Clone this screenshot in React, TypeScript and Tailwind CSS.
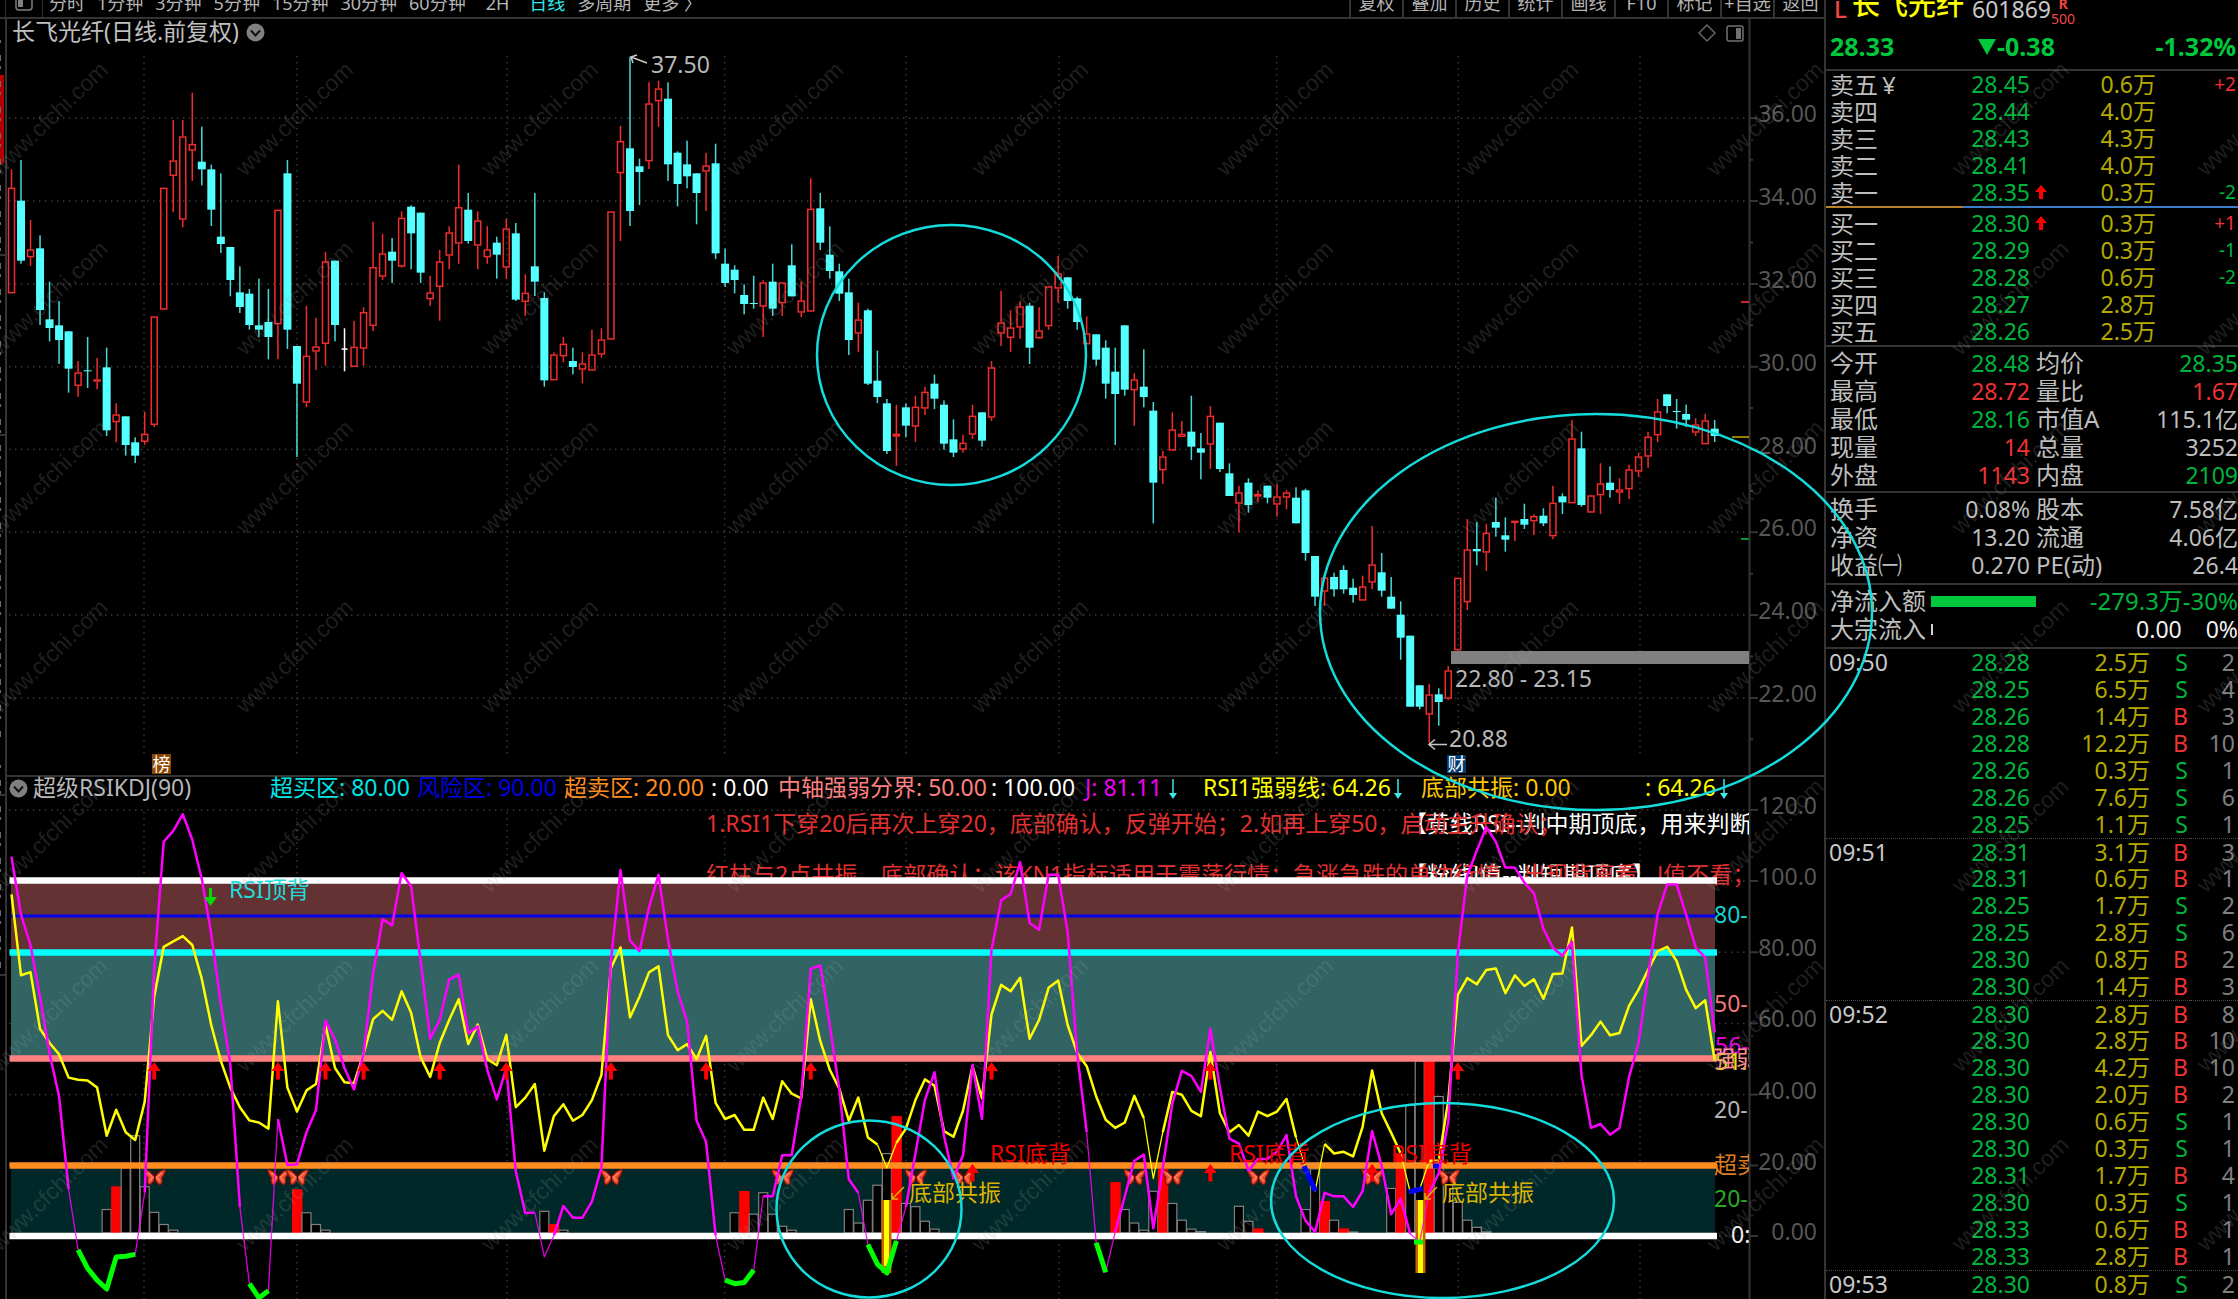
import type { ReactNode } from "react";

/* ---------- shared chart geometry ---------- */
const X0 = 11.5;
const STEP = 9.515;
const xAt = (i: number) => X0 + i * STEP;
const price = (v: number) => v / 3;
const osc = (v: number) => 740 + v / 2.805;

type Kind = "r" | "c" | "w";
type Candle = [Kind, number, number, number, number];

/* kind, high, body top, body bottom, low (thirds of a pixel) */
const candles: Candle[] = [
  ["r", 508, 563, 880, 880], ["c", 480, 602, 782, 791], ["r", 660, 748, 772, 798], ["c", 706, 745, 930, 975],
  ["c", 845, 958, 984, 1024], ["c", 903, 976, 1020, 1092], ["c", 994, 994, 1106, 1178], ["r", 1083, 1117, 1158, 1190],
  ["c", 1011, 1111, 1113, 1164], ["r", 1074, 1138, 1145, 1168], ["c", 1043, 1102, 1291, 1308], ["r", 1210, 1243, 1267, 1327],
  ["c", 1249, 1249, 1335, 1367], ["c", 1312, 1327, 1367, 1389], ["r", 1236, 1301, 1326, 1334], ["r", 949, 949, 1275, 1281],
  ["r", 563, 563, 929, 929], ["r", 360, 481, 528, 637], ["r", 360, 409, 659, 682], ["r", 278, 432, 452, 543],
  ["c", 380, 485, 508, 556], ["c", 494, 508, 629, 678], ["c", 520, 710, 732, 759], ["c", 741, 741, 840, 889],
  ["c", 799, 877, 921, 939], ["c", 867, 881, 975, 989], ["c", 836, 976, 989, 1011], ["c", 867, 966, 1011, 1078],
  ["r", 629, 629, 973, 1078], ["c", 480, 520, 989, 1047], ["c", 1038, 1038, 1151, 1371], ["r", 917, 1067, 1208, 1222],
  ["r", 953, 1039, 1055, 1110], ["r", 755, 784, 1032, 1097], ["c", 782, 782, 975, 1024], ["w", 985, 1045, 1047, 1114],
  ["r", 962, 1040, 1101, 1101], ["r", 922, 936, 1046, 1097], ["r", 665, 801, 978, 993], ["r", 701, 760, 830, 840],
  ["c", 714, 755, 782, 849], ["r", 634, 653, 800, 803], ["c", 616, 620, 700, 808], ["c", 638, 638, 818, 849],
  ["r", 827, 877, 898, 917], ["r", 750, 784, 861, 962], ["r", 679, 697, 767, 808], ["r", 494, 621, 731, 791],
  ["c", 579, 629, 723, 731], ["r", 634, 661, 737, 808], ["r", 679, 748, 772, 791], ["c", 710, 728, 764, 836],
  ["r", 656, 685, 803, 836], ["c", 669, 700, 899, 903], ["r", 823, 878, 906, 948], ["c", 579, 799, 845, 888],
  ["c", 877, 894, 1141, 1160], ["r", 1057, 1063, 1141, 1141], ["r", 1011, 1031, 1069, 1087], ["c", 1043, 1083, 1101, 1123],
  ["r", 1057, 1090, 1109, 1150], ["r", 989, 1063, 1112, 1112], ["r", 985, 1018, 1064, 1073], ["r", 634, 634, 1019, 1019],
  ["r", 377, 423, 520, 723], ["c", 170, 445, 633, 678], ["c", 476, 499, 516, 615], ["r", 247, 310, 484, 507],
  ["r", 242, 265, 304, 380], ["c", 247, 296, 493, 543], ["c", 454, 458, 552, 619], ["c", 422, 493, 529, 565],
  ["c", 520, 520, 579, 673], ["r", 458, 496, 515, 633], ["c", 431, 490, 760, 777], ["c", 746, 791, 849, 861],
  ["c", 796, 809, 840, 880], ["c", 853, 885, 912, 943], ["c", 827, 909, 912, 926], ["r", 841, 847, 920, 1011],
  ["c", 791, 845, 926, 948], ["r", 847, 847, 910, 948], ["c", 733, 796, 889, 889], ["r", 845, 901, 938, 952],
  ["r", 535, 626, 935, 935], ["c", 579, 625, 728, 750], ["c", 679, 764, 813, 836], ["c", 791, 814, 881, 903],
  ["c", 836, 877, 1020, 1065], ["r", 908, 958, 1001, 1055], ["c", 926, 931, 1151, 1155], ["c", 1052, 1142, 1191, 1209],
  ["c", 1197, 1210, 1353, 1362], ["r", 1214, 1301, 1310, 1398], ["c", 1210, 1222, 1277, 1312], ["r", 1187, 1220, 1280, 1326],
  ["r", 1160, 1175, 1226, 1245], ["c", 1124, 1151, 1196, 1227], ["c", 1201, 1214, 1331, 1349], ["c", 1258, 1318, 1358, 1371],
  ["r", 1304, 1328, 1349, 1358], ["r", 1214, 1247, 1304, 1316], ["c", 1237, 1237, 1322, 1340], ["r", 1083, 1102, 1253, 1263],
  ["r", 872, 967, 1001, 1038], ["r", 931, 982, 1014, 1056], ["r", 904, 919, 983, 1016], ["c", 908, 917, 1043, 1092],
  ["r", 922, 991, 1015, 1016], ["r", 859, 859, 979, 989], ["r", 768, 820, 866, 908], ["c", 832, 832, 903, 926],
  ["c", 890, 895, 966, 989], ["r", 949, 1000, 1033, 1033], ["c", 1003, 1003, 1079, 1097], ["c", 1021, 1043, 1151, 1196],
  ["c", 1043, 1115, 1182, 1335], ["c", 976, 976, 1169, 1187], ["r", 1120, 1138, 1171, 1277], ["c", 1048, 1160, 1191, 1222],
  ["c", 1206, 1232, 1448, 1570], ["r", 1353, 1369, 1411, 1452], ["r", 1237, 1288, 1352, 1352], ["r", 1263, 1301, 1311, 1311],
  ["c", 1187, 1295, 1340, 1380], ["c", 1299, 1345, 1358, 1438], ["r", 1219, 1247, 1334, 1407], ["c", 1268, 1268, 1407, 1416],
  ["c", 1390, 1420, 1488, 1488], ["r", 1457, 1477, 1511, 1597], ["c", 1435, 1448, 1515, 1538], ["r", 1471, 1482, 1490, 1506],
  ["c", 1457, 1457, 1493, 1510], ["r", 1452, 1489, 1514, 1550], ["r", 1471, 1477, 1493, 1528], ["c", 1462, 1493, 1570, 1570],
  ["c", 1466, 1471, 1659, 1682], ["c", 1668, 1668, 1790, 1818], ["r", 1732, 1732, 1775, 1818], ["c", 1718, 1731, 1768, 1790],
  ["c", 1696, 1710, 1768, 1781], ["c", 1736, 1763, 1785, 1808], ["r", 1727, 1759, 1802, 1802], ["r", 1578, 1693, 1748, 1768],
  ["c", 1659, 1717, 1772, 1790], ["c", 1731, 1790, 1826, 1826], ["c", 1804, 1844, 1913, 1979], ["c", 1907, 1907, 2120, 2120],
  ["c", 2056, 2056, 2120, 2128], ["r", 2051, 2083, 2144, 2230], ["c", 2065, 2083, 2106, 2177], ["r", 1998, 2011, 2096, 2101],
  ["r", 1733, 1733, 1951, 1951], ["r", 1557, 1648, 1807, 1830], ["c", 1566, 1647, 1654, 1696], ["r", 1571, 1598, 1658, 1713],
  ["c", 1493, 1566, 1583, 1610], ["c", 1552, 1606, 1619, 1655], ["r", 1562, 1562, 1569, 1623], ["c", 1511, 1557, 1574, 1587],
  ["r", 1543, 1548, 1564, 1605], ["c", 1525, 1547, 1570, 1578], ["r", 1457, 1508, 1609, 1618], ["c", 1480, 1489, 1507, 1542],
  ["r", 1260, 1315, 1510, 1510], ["c", 1295, 1345, 1515, 1520], ["r", 1484, 1486, 1538, 1538], ["r", 1390, 1450, 1486, 1542],
  ["c", 1399, 1448, 1470, 1493], ["r", 1435, 1468, 1478, 1511], ["r", 1394, 1408, 1468, 1497], ["r", 1359, 1369, 1415, 1430],
  ["r", 1295, 1310, 1370, 1403], ["r", 1197, 1234, 1306, 1327], ["c", 1183, 1183, 1218, 1240], ["c", 1197, 1233, 1236, 1286],
  ["c", 1214, 1242, 1259, 1281], ["r", 1255, 1273, 1298, 1308], ["r", 1241, 1261, 1333, 1333], ["c", 1260, 1286, 1308, 1326],
];

const rsi = [
  433, 660, 651, 810, 850, 882, 947, 953, 955, 975, 1110, 1037, 1100, 1122, 1015, 720, 580, 565, 550, 575, 670, 800, 900,
  975, 1030, 1067, 1073, 1090, 733, 975, 1042, 983, 965, 800, 920, 960, 963, 880, 783, 760, 785, 705, 765, 890, 945, 850,
  785, 727, 853, 798, 895, 912, 827, 1030, 1003, 965, 1152, 1055, 1022, 1068, 1052, 1010, 940, 640, 582, 778, 720, 652,
  635, 828, 870, 853, 895, 830, 1018, 1063, 1052, 1093, 1093, 1003, 1063, 957, 992, 1005, 727, 845, 925, 978, 1068, 1003,
  1115, 1135, 1200, 1130, 1090, 1010, 952, 970, 1097, 1113, 1040, 915, 1005, 770, 687, 705, 667, 838, 785, 695, 675, 800,
  878, 915, 1000, 1065, 1088, 1073, 998, 1060, 1230, 1100, 987, 995, 1040, 1055, 875, 1047, 1100, 1080, 1110, 1042, 1055,
  1042, 1007, 1115, 1200, 1265, 1133, 1160, 1155, 1168, 1085, 927, 1047, 1102, 1160, 1268, 1260, 1180, 1180, 1010, 715,
  668, 685, 645, 641, 710, 660, 690, 671, 726, 656, 655, 526, 858, 828, 790, 828, 822, 745, 700, 645, 593, 580, 620, 700,
  752, 730, 900,
];

const jLine = [
  327, 490, 575, 720, 880, 1000, 1260, 1430, 1482, 1515, 1540, 1450, 1448, 1443, 1270, 640, 285, 255, 208, 280, 390, 545,
  740, 910, 1310, 1525, 1565, 1545, 1063, 1192, 1190, 1100, 1038, 787, 840, 920, 980, 880, 655, 503, 520, 373, 410, 620,
  838, 785, 672, 658, 823, 803, 925, 1008, 920, 1210, 1327, 1325, 1450, 1390, 1307, 1340, 1340, 1295, 1200, 620, 365, 562,
  592, 470, 378, 560, 705, 790, 1068, 1128, 1390, 1515, 1525, 1522, 1487, 1280, 1280, 1165, 1165, 1000, 642, 632, 800,
  980, 1232, 1270, 1415, 1470, 1495, 1405, 1310, 1160, 1010, 932, 1110, 1230, 1165, 912, 1063, 590, 450, 432, 343, 513,
  532, 378, 378, 540, 880, 1100, 1410, 1493, 1380, 1280, 1180, 1163, 1370, 1200, 1020, 928, 942, 987, 810, 975, 1118,
  1132, 1208, 1175, 1175, 1155, 1108, 1280, 1348, 1380, 1270, 1280, 1280, 1310, 1265, 1097, 1195, 1330, 1287, 1385, 1408,
  1270, 1215, 1070, 600, 380, 310, 245, 285, 358, 358, 400, 430, 530, 583, 605, 566, 940, 1088, 1077, 1107, 1088, 945,
  850, 660, 490, 405, 405, 490, 582, 610, 820,
];

/* index, top, filled */
const bars: [number, number, boolean][] = [
  [10, 1317, false], [11, 1252, true], [12, 1200, false], [13, 1110, false], [14, 1253, false], [15, 1325, false],
  [16, 1359, false], [17, 1375, false], [30, 1260, true], [31, 1326, false], [32, 1359, false], [33, 1375, false],
  [56, 1322, false], [57, 1358, true], [58, 1375, false], [76, 1326, false], [77, 1265, true], [78, 1330, false],
  [79, 1270, false], [80, 1330, false], [81, 1364, false], [82, 1375, false], [88, 1317, false], [89, 1355, false],
  [90, 1291, false], [91, 1249, false], [92, 1160, false], [93, 1055, true], [94, 1300, false], [95, 1309, false],
  [96, 1350, false], [97, 1372, false], [116, 1240, true], [117, 1317, false], [118, 1355, false], [119, 1375, false],
  [120, 1266, false], [121, 1203, true], [122, 1300, false], [123, 1347, false], [124, 1372, false], [125, 1379, false],
  [129, 1308, false], [130, 1350, false], [131, 1370, true], [136, 1317, false], [137, 1203, false], [138, 1293, true],
  [139, 1347, false], [140, 1370, true], [141, 1380, false], [145, 1258, false], [146, 1160, true], [147, 1025, false],
  [148, 900, false], [149, 900, true], [150, 1000, false], [151, 1215, false], [152, 1297, false], [153, 1347, false],
  [154, 1367, false], [155, 1380, false],
];

const segments = (data: number[], thin: (v: number) => boolean, wantThin: boolean) => {
  let d = "";
  let open = false;
  for (let i = 1; i < data.length; i++) {
    if (thin(Math.max(data[i - 1], data[i])) !== wantThin) {
      open = false;
      continue;
    }
    if (!open) d += `M${xAt(i - 1).toFixed(1)} ${osc(data[i - 1]).toFixed(1)}`;
    d += `L${xAt(i).toFixed(1)} ${osc(data[i]).toFixed(1)}`;
    open = true;
  }
  return d;
};

const run = (data: number[], from: number, to: number) =>
  data
    .slice(from, to + 1)
    .map((v, k) => `${xAt(from + k).toFixed(1)},${osc(v).toFixed(1)}`)
    .join(" ");

const gridX = [144, 297, 507, 724.6, 906, 1059, 1276.6, 1458.3, 1640];
const priceTicks = [36, 34, 32, 30, 28, 26, 24, 22];
const tickY = (p: number) => 118.3 + (36 - p) * 41.4;
const oscTicks: [string, number][] = [
  ["120.0", 809.9], ["100.0", 881], ["80.00", 952.3], ["60.00", 1023.4], ["40.00", 1094.6], ["20.00", 1165.5], ["0.00", 1236],
];

function Candles() {
  return (
    <g>
      {candles.map(([k, h, t, b, l], i) => {
        const x = xAt(i);
        if (k === "c")
          return (
            <g key={i} fill="#54ffff">
              <rect x={x - 0.75} y={price(h)} width={1.5} height={price(l - h)} opacity={0.85} />
              <rect x={x - 4} y={price(t)} width={8} height={Math.max(price(b - t), 1)} />
            </g>
          );
        if (k === "w")
          return (
            <g key={i} fill="#ffffff">
              <rect x={x - 0.75} y={price(h)} width={1.5} height={price(l - h)} />
              <rect x={x - 3} y={price(t)} width={6} height={1.5} />
            </g>
          );
        return (
          <g key={i} stroke="#f02c2c" strokeWidth={1.5} fill="none">
            <path d={`M${x} ${price(h)}V${price(t)}M${x} ${price(b)}V${price(l)}`} />
            <rect x={x - 3} y={price(t) + 0.7} width={6} height={Math.max(price(b - t) - 1.4, 0.5)} />
          </g>
        );
      })}
    </g>
  );
}

function UpArrow({ x, y }: { x: number; y: number }) {
  return <path d={`M${x} ${y}l6.5 9h-4.5v8.5h-4v-8.5h-4.5z`} fill="#ff0000" />;
}

function Butterfly({ x, y }: { x: number; y: number }) {
  return (
    <g transform={`translate(${x} ${y})`}>
      <path
        d="M-1-1C-4-5-8-8-11-7C-10-3-9-1-7 1C-8 4-7 7-5 8C-3 7-1 4 0 2C1 4 3 7 5 8C7 7 8 4 7 1C9-1 10-3 11-7C8-8 4-5 1-1Z"
        fill="#f0492c"
        stroke="#7a1408"
        strokeWidth={1.2}
      />
      <path d="M-7-4L-2 0L-5 4M7-4L2 0L5 4" stroke="#ff8a6a" strokeWidth={1.4} fill="none" />
      <path d="M0 4V-2L-3-7M0-2L3-7" stroke="#3a0a04" strokeWidth={1.2} fill="none" />
    </g>
  );
}

function DownMark({ x }: { x: number }) {
  return (
    <g>
      <path d={`M${x} 779V797`} stroke="#40e8e8" strokeWidth={1.5} />
      <path d={`M${x - 4} 793h8l-4 6z`} fill="#40e8e8" />
    </g>
  );
}

function T({ x, y, c, s = 23, a = "start", children }: { x: number; y: number; c: string; s?: number; a?: "start" | "end" | "middle"; children: ReactNode }) {
  return (
    <text x={x} y={y} fill={c} fontSize={s} textAnchor={a} xmlSpace="preserve">
      {children}
    </text>
  );
}

function Chart() {
  const below0 = (v: number) => v > 1391;
  const below20 = (v: number) => v > 1193;
  return (
    <svg viewBox="0 19 1826 1280" className="block h-auto w-full overflow-visible" role="img" aria-label="长飞光纤 日线">
      <defs>
        <clipPath id="plot">
          <rect x={0} y={18} width={1749} height={1290} />
        </clipPath>
      </defs>

      {/* frame and grid */}
      <g stroke="#3a3a3a" strokeWidth={1.5} strokeDasharray="1.5 4.5">
        {gridX.map((x) => (
          <path key={x} d={`M${x} 56V755M${x} 812V1299`} />
        ))}
        {priceTicks.map((p) => (
          <path key={p} d={`M9 ${tickY(p)}H1749`} />
        ))}
        {oscTicks.map(([l, y]) => (
          <path key={l} d={`M9 ${y}H1749`} />
        ))}
      </g>
      <g stroke="#343434" strokeWidth={2}>
        <path d="M6 19V1299M1749.5 19V1299M1825 0V1299M6 776H1825" />
        {priceTicks.map((p) => (
          <path key={p} d={`M1749 ${tickY(p)}h9M1749 ${tickY(p) + 41.4}h4`} />
        ))}
        {oscTicks.map(([l, y]) => (
          <path key={l} d={`M1749 ${y}h9`} />
        ))}
        <path d="M0 255h5M0 435h5M0 795h5M0 975h5" />
      </g>
      <rect x={0} y={75} width={4} height={89} fill="#b40000" />
      <path d="M0.5 40V740M0.5 765V970" stroke="#6a6a6a" strokeDasharray="3 12 6 5" />

      {/* title line */}
      <T x={12} y={40} c="#c0c0c0">长飞光纤(日线.前复权)</T>
      <circle cx={255.5} cy={32.5} r={9} fill="#808080" />
      <path d="M251 30.500l4.500 5 4.500-5" stroke="#111" strokeWidth={2} fill="none" />
      <path d="M1707 25l8 8-8 8-8-8z" stroke="#666" strokeWidth={1.5} fill="none" />
      <rect x={1727} y={26} width={16} height={15} rx={2} stroke="#707070" strokeWidth={1.500} fill="none" />
      <rect x={1736} y={28} width={5} height={11} fill="#707070" />

      {/* axis labels */}
      {priceTicks.map((p) => (
        <T key={p} x={1817} y={tickY(p) + 4} c="#565656" a="end">{p.toFixed(2)}</T>
      ))}
      {oscTicks.map(([l, y]) => (
        <T key={l} x={1817} y={y + 4} c="#565656" a="end">{l}</T>
      ))}

      <Candles />

      <rect x={1741} y={301} width={8} height={2} fill="#d02424" />
      <rect x={1732} y={436} width={17} height={2} fill="#968200" />
      <rect x={1741} y={538} width={8} height={2} fill="#009632" />
      <rect x={1451} y={651} width={298} height={13} fill="#808080" />
      <T x={1455} y={687} c="#b8b8b8">22.80 - 23.15</T>
      <path d="M647 63l-16-6m6-2l-6 2 2 6" stroke="#c8c8c8" strokeWidth={1.500} fill="none" />
      <T x={651} y={73} c="#b8b8b8">37.50</T>
      <path d="M1447 744.500h-18m6-5l-6 5 6 5" stroke="#c8c8c8" strokeWidth={1.500} fill="none" />
      <T x={1449} y={747} c="#b8b8b8">20.88</T>
      <rect x={1447} y={755} width={19} height={18} fill="#003c74" />
      <T x={1456.500} y={771} c="#fff" s={18} a="middle">财</T>
      <rect x={152} y={754} width={19} height={20} fill="#8c4600" />
      <T x={161.500} y={771} c="#fff" s={18} a="middle">榜</T>

      {/* indicator header */}
      <circle cx={18.500} cy={788.500} r={9} fill="#808080" />
      <path d="M14 786.500l4.500 5 4.500-5" stroke="#111" strokeWidth={2} fill="none" />
      <T x={33} y={796} c="#b8b8b8">超级RSIKDJ(90)</T>
      <T x={270} y={796} c="#00e6e6">超买区: 80.00</T>
      <T x={417} y={796} c="#0000e6">风险区: 90.00</T>
      <T x={564} y={796} c="#ff8c1e">超卖区: 20.00</T>
      <T x={711} y={796} c="#fff">: 0.00</T>
      <T x={778} y={796} c="#ff8080">中轴强弱分界: 50.00</T>
      <T x={991} y={796} c="#fff">: 100.00</T>
      <T x={1085} y={796} c="#f000f0">J: 81.11</T>
      <DownMark x={1173} />
      <T x={1203} y={796} c="#ffff00">RSI1强弱线: 64.26</T>
      <DownMark x={1398} />
      <T x={1421} y={796} c="#ffc800">底部共振: 0.00</T>
      <T x={1645} y={796} c="#ffff00">: 64.26</T>
      <DownMark x={1724} />

      <g clipPath="url(#plot)">
        <T x={1404} y={832} c="#fff">【黄线RSI--判中期顶底，用来判断--</T>
        <T x={706} y={832} c="#e23030">1.RSI1下穿20后再次上穿20，底部确认，反弹开始；2.如再上穿50，启动主升确认；</T>
        <T x={1404} y={883} c="#fff">【粉线J值--判短期顶底】</T>
        <T x={706} y={883} c="#e23030">红柱与2点共振，底部确认；该KN1指标适用于震荡行情；急涨急跌的单边行情、出现背离看</T>
        <T x={1657} y={883} c="#e23030">J值不看；</T>

        {/* zones */}
        <rect x={11} y={881} width={1704} height={72} fill="#643232" />
        <rect x={11} y={953} width={1704} height={106} fill="#326464" />
        <rect x={11} y={1165} width={1704} height={70} fill="#002828" />

        <g>
          {bars.map(([i, top, filled]) =>
            filled ? (
              <rect key={i} x={xAt(i) - 5} y={osc(top)} width={10.500} height={1233 - osc(top)} fill="#ff0000" />
            ) : (
              <rect key={i} x={xAt(i) - 4.500} y={osc(top)} width={9} height={Math.max(1233 - osc(top), 1)} fill="#000" stroke="#808080" strokeWidth={1.200} />
            ),
          )}
        </g>

        <g strokeWidth={6.500}>
          <path d="M9.500 880.500H1717M9.500 1236H1717" stroke="#fff" />
          <path d="M11 916H1716" stroke="#0000f0" strokeWidth={3} />
          <path d="M9.500 952.500H1717" stroke="#00ffff" />
          <path d="M9.500 1058.500H1717" stroke="#ff8080" />
          <path d="M9.500 1165.500H1717" stroke="#ff8c1e" />
        </g>

        {[15, 28, 30, 63, 81, 95, 100, 118, 122, 131, 143, 151].map((i) => (
          <Butterfly key={i} x={xAt(i) + 0.500} y={1177} />
        ))}

        <T x={1715} y={1054} c="#e000e0">56-</T>
        <T x={1715} y={1070} c="#e6e600">51.8</T>
        <T x={1713} y={1067} c="#ff9090">强弱</T>

        <g fill="none" stroke="#ffff00" strokeLinejoin="round">
          <path d={segments(rsi, below20, false)} strokeWidth={2.500} />
          <path d={segments(rsi, below20, true)} strokeWidth={1.300} />
        </g>
        {[881.500, 1415.500].map((x, i) => (
          <g key={x}>
            <rect x={x} y={1200} width={10} height={73} fill="#c86400" />
            <rect x={x + 2.500} y={1200} width={5} height={i ? 73 : 66} fill="#ffff00" />
          </g>
        ))}
        <g fill="none" stroke="#ff00ff" strokeLinejoin="round">
          <path d={segments(jLine, below0, false)} strokeWidth={2.500} />
          <path d={segments(jLine, below0, true)} strokeWidth={1.300} opacity={0.85} />
        </g>
        <g fill="none" stroke="#00ff00" strokeWidth={5} strokeLinejoin="round">
          {[[7, 13], [25, 27], [75, 78], [90, 93], [114, 115]].map(([a, b]) => (
            <polyline key={a} points={run(jLine, a, b)} />
          ))}
          <path d="M1414 1242H1423" />
        </g>
        <path d="M1304 1166L1315.500 1191M1409 1192L1422.500 1188.500M1433 1166H1439" stroke="#0000ff" strokeWidth={5} fill="none" />

        {[15, 28, 33, 37, 45, 52, 63, 73, 84, 103, 126, 152].map((i) => (
          <UpArrow key={i} x={xAt(i)} y={1062} />
        ))}
        {[101, 126, 143].map((i) => (
          <UpArrow key={i} x={xAt(i)} y={1164} />
        ))}
        <path d="M209 888h3v9h5l-6.500 9-6.500-9h5z" fill="#00dc00" />

        <T x={229} y={898} c="#20dcdc" s={23}>RSI顶背</T>
        <T x={990} y={1162} c="#f00000" s={23}>RSI底背</T>
        <T x={1229} y={1162} c="#f00000" s={23}>RSI底背</T>
        <T x={1391} y={1162} c="#f00000" s={23}>RSI底背</T>
        {[909, 1442].map((x) => (
          <g key={x}>
            <path d={`M${x - 5} 1187l-12 12m0-6v6h6`} stroke="#dcb400" strokeWidth={1.500} fill="none" />
            <T x={x} y={1201} c="#dcb400" s={23}>底部共振</T>
          </g>
        ))}

        <T x={1714} y={923} c="#14d2d2">80-</T>
        <T x={1714} y={1012} c="#f07878">50-</T>
        <T x={1714} y={1118} c="#b4b4b4">20-</T>
        <T x={1714} y={1173} c="#dc7d1e">超卖</T>
        <T x={1714} y={1207} c="#28aa28">20-</T>
        <T x={1731} y={1243} c="#f0f0f0">0:</T>
      </g>

      {/* hand-drawn marks */}
      <g fill="none" stroke="#14dcdc" strokeWidth={2.500}>
        <ellipse cx={951.500} cy={355} rx={134.500} ry={130} />
        <ellipse cx={1596} cy={612} rx={276} ry={198} />
        <ellipse cx={869} cy={1209} rx={92.500} ry={88.500} />
        <ellipse cx={1442.500} cy={1200.500} rx={171.500} ry={97.500} />
      </g>

      {/* watermark */}
      <g fill="#a0a0a0" opacity={0.19} fontSize={23} className="font-['Liberation_Sans',sans-serif]">
        {Array.from({ length: 70 }, (_, n) => {
          const x = (n % 10) * 245.100;
          const y = 177 + Math.floor(n / 10) * 179.200;
          return (
            <text key={n} transform={`translate(${x} ${y}) rotate(-44)`} aria-hidden="true">
              www.cfchi.com
            </text>
          );
        })}
      </g>
    </svg>
  );
}

/* ---------- toolbar ---------- */
const periods = ["分时", "1分钟", "3分钟", "5分钟", "15分钟", "30分钟", "60分钟", "2H", "日线", "多周期", "更多 〉"];
const tools = ["复权", "叠加", "历史", "统计", "画线", "F10", "标记", "+自选", "返回"];

function Toolbar() {
  return (
    <div className="flex h-[19px] items-end overflow-hidden border-b-2 border-[#343434] text-[18px] leading-[18px] text-[#b4b4b4]">
      <div className="ml-[5px] flex h-full w-[38px] shrink-0 items-start border-x border-[#343434] pl-[9px]">
        <svg width="18" height="11" viewBox="0 0 18 11" aria-hidden="true">
          <path d="M1 0v7q0 3 3 3h10q3 0 3-3V0" fill="none" stroke="#808080" strokeWidth="1.5" />
          <rect x="3" y="0" width="5" height="7" fill="#808080" />
        </svg>
      </div>
      <nav className="flex gap-3 pb-[5px] pl-1.5">
        {periods.map((p) => (
          <button
            key={p}
            type="button"
            className={p === "日线" ? "whitespace-nowrap text-[#30e8e8]" : p === "2H" ? "whitespace-nowrap px-2" : "whitespace-nowrap"}
          >
            {p}
          </button>
        ))}
      </nav>
      <div className="ml-auto flex h-full items-end">
        {tools.map((t) => (
          <button key={t} type="button" className="flex h-full w-[53px] items-end justify-center border-l-2 border-[#343434] pb-[5px] whitespace-nowrap">
            {t}
          </button>
        ))}
      </div>
    </div>
  );
}

/* ---------- quote panel ---------- */
const G = "text-[#00b43c]";
const R = "text-[#f03232]";
const N = "text-[#bebebe]";
const W = "text-[#f0f0f0]";

type Level = [string, string, string, string, boolean];
const asks: Level[] = [
  ["卖五¥", "28.45", "0.6万", "+2", false],
  ["卖四", "28.44", "4.0万", "", false],
  ["卖三", "28.43", "4.3万", "", false],
  ["卖二", "28.41", "4.0万", "", false],
  ["卖一", "28.35", "0.3万", "-2", true],
];
const bids: Level[] = [
  ["买一", "28.30", "0.3万", "+1", true],
  ["买二", "28.29", "0.3万", "-1", false],
  ["买三", "28.28", "0.6万", "-2", false],
  ["买四", "28.27", "2.8万", "", false],
  ["买五", "28.26", "2.5万", "", false],
];

function Book({ rows }: { rows: Level[] }) {
  return (
    <table className="w-full table-fixed">
      <colgroup>
        <col className="w-[104px]" />
        <col className="w-[100px]" />
        <col className="w-[126px]" />
        <col />
      </colgroup>
      <tbody>
        {rows.map(([l, p, v, d, up]) => (
          <tr key={l} className="leading-[27px]">
            <th scope="row" className="p-0 pl-1 text-left text-[24px] font-normal whitespace-nowrap text-[#bebebe]">
              {l.slice(0, 2)}
              {l.length > 2 && <span className="ml-1">{l.slice(2)}</span>}
            </th>
            <td className="p-0 text-right text-[#00b43c]">{p}</td>
            <td className="p-0 text-[#b4aa00]">
              <div className="flex items-center justify-between">
                <svg width="22" height="18" viewBox="0 0 22 18" aria-hidden="true">
                  {up && <path d="M11 1l6 7h-4v7H9V8H5z" fill="#ff0000" />}
                </svg>
                <span>{v}</span>
              </div>
            </td>
            <td className={d.startsWith("+") ? "p-0 pr-0.5 text-right text-[19px] text-[#f03232]" : "p-0 pr-0.5 text-right text-[19px] text-[#00b43c]"}>{d}</td>
          </tr>
        ))}
      </tbody>
    </table>
  );
}

type Stat = [string, string, string, string, string, string];
const statsA: Stat[] = [
  ["今开", "28.48", G, "均价", "28.35", G],
  ["最高", "28.72", R, "量比", "1.67", R],
  ["最低", "28.16", G, "市值A", "115.1亿", N],
  ["现量", "14", R, "总量", "3252", N],
  ["外盘", "1143", R, "内盘", "2109", G],
];
const statsB: Stat[] = [
  ["换手", "0.08%", N, "股本", "7.58亿", N],
  ["净资", "13.20", N, "流通", "4.06亿", N],
  ["收益㈠", "0.270", N, "PE(动)", "26.4", N],
];

function Stats({ rows }: { rows: Stat[] }) {
  return (
    <table className="w-full table-fixed">
      <colgroup>
        <col className="w-[104px]" />
        <col className="w-[100px]" />
        <col className="w-[84px]" />
        <col />
      </colgroup>
      <tbody>
        {rows.map(([a, av, ac, b, bv, bc]) => (
          <tr key={a} className="leading-7">
            <th scope="row" className="p-0 pl-1 text-left text-[24px] font-normal whitespace-nowrap text-[#bebebe]">{a}</th>
            <td className={`p-0 text-right ${ac}`}>{av}</td>
            <th scope="row" className="p-0 pl-1.5 text-left text-[24px] font-normal whitespace-nowrap text-[#bebebe]">{b}</th>
            <td className={`p-0 text-right whitespace-nowrap ${bc}`}>{bv}</td>
          </tr>
        ))}
      </tbody>
    </table>
  );
}

const ticks: [string, string, string, string, string][] = [
  ["09:50", "28.28", "2.5万", "S", "2"],
  ["", "28.25", "6.5万", "S", "4"],
  ["", "28.26", "1.4万", "B", "3"],
  ["", "28.28", "12.2万", "B", "10"],
  ["", "28.26", "0.3万", "S", "1"],
  ["", "28.26", "7.6万", "S", "6"],
  ["", "28.25", "1.1万", "S", "1"],
  ["09:51", "28.31", "3.1万", "B", "3"],
  ["", "28.31", "0.6万", "B", "1"],
  ["", "28.25", "1.7万", "S", "2"],
  ["", "28.25", "2.8万", "S", "6"],
  ["", "28.30", "0.8万", "B", "2"],
  ["", "28.30", "1.4万", "B", "3"],
  ["09:52", "28.30", "2.8万", "B", "8"],
  ["", "28.30", "2.8万", "B", "10"],
  ["", "28.30", "4.2万", "B", "10"],
  ["", "28.30", "2.0万", "B", "2"],
  ["", "28.30", "0.6万", "S", "1"],
  ["", "28.30", "0.3万", "S", "1"],
  ["", "28.31", "1.7万", "B", "4"],
  ["", "28.30", "0.3万", "S", "1"],
  ["", "28.33", "0.6万", "B", "1"],
  ["", "28.33", "2.8万", "B", "1"],
  ["09:53", "28.30", "0.8万", "S", "2"],
];

function QuotePanel() {
  return (
    <aside className="flex w-[412px] shrink-0 flex-col text-[23px]">
      <header className="border-b-2 border-[#343434]">
        <div className="flex h-[26px] items-end overflow-hidden pl-2 whitespace-nowrap">
          <span className="w-[18px] text-[24px] leading-[34px] font-medium text-[#f04646]">L</span>
          <h1 className="text-[28px] leading-[44px] font-medium text-[#ffff00]">长飞光纤</h1>
          <span className="ml-2 leading-[34px] text-[#c8c8c8]">601869</span>
          <span className="flex flex-col items-center text-[14px] leading-[15px] text-[#f04646]">
            <b>R</b>
            <span>500</span>
          </span>
        </div>
        <div className="flex h-[43px] items-center pr-0.5 pb-px pl-1 text-[25px] font-bold text-[#00c83c]">
          <span className="w-[147px]">28.33</span>
          <span className="flex items-center">
            <svg width="20" height="18" viewBox="0 0 20 18" aria-hidden="true">
              <path d="M1 1h18l-9 16z" fill="#00c83c" />
            </svg>
            -0.38
          </span>
          <span className="ml-auto">-1.32%</span>
        </div>
      </header>

      <section aria-label="卖盘">
        <Book rows={asks} />
      </section>
      <div className="flex h-0.5">
        <div className="w-1/3 bg-[#b8822c]" />
        <div className="flex-1 bg-[#3c7dc8]" />
      </div>
      <section aria-label="买盘" className="border-b-2 border-[#343434] pt-0.5">
        <Book rows={bids} />
      </section>
      <section aria-label="行情" className="border-b-2 border-[#343434] py-0.5">
        <Stats rows={statsA} />
      </section>
      <section aria-label="基本面" className="border-b-2 border-[#343434] pt-0.5 pb-1">
        <Stats rows={statsB} />
      </section>
      <section aria-label="资金流" className="border-b-2 border-[#343434] pt-0.5 pb-1 pl-1 leading-7 text-[#bebebe]">
        <div className="flex items-center">
          <span className="w-[101px] text-[24px]">净流入额</span>
          <span className="h-[11px] w-[105px] bg-[#00c83c]" />
          <span className="ml-auto text-[24px] text-[#00b43c]">-279.3万-30%</span>
        </div>
        <div className="flex items-center">
          <span className="w-[101px] text-[24px]">大宗流入</span>
          <span className="h-[11px] w-0.5 bg-[#d0d0d0]" />
          <span className={`ml-auto ${W}`}>0.00</span>
          <span className={`ml-6 ${W}`}>0%</span>
        </div>
      </section>

      <table className="w-full table-fixed border-separate border-spacing-0">
        <colgroup>
          <col className="w-[104px]" />
          <col className="w-[100px]" />
          <col className="w-[120px]" />
          <col className="w-[40px]" />
          <col />
        </colgroup>
        <tbody>
          {ticks.map(([t, p, v, side, n], i) => (
            <tr
              key={i}
              className={t && i ? "h-[27px] leading-[26px] [&>td]:border-t [&>td]:border-dotted [&>td]:border-[#484848]" : "h-[27px] leading-[27px]"}
            >
              <td className="p-0 pl-[3px] text-[#c8c8c8]">{t}</td>
              <td className="p-0 text-right text-[#00b43c]">{p}</td>
              <td className="p-0 text-right text-[#b4aa00]">{v}</td>
              <td className={side === "S" ? "p-0 pr-0.5 text-right text-[#00b43c]" : "p-0 pr-0.5 text-right text-[#f03232]"}>{side}</td>
              <td className="p-0 pr-[3px] text-right text-[#808080]">{n}</td>
            </tr>
          ))}
        </tbody>
      </table>
    </aside>
  );
}

export default function App() {
  return (
    <div className="flex h-screen items-start overflow-hidden bg-black font-['Noto_Sans','Noto_Sans_CJK_SC',sans-serif]">
      <main className="relative z-10 min-w-0 flex-1">
        <Toolbar />
        <Chart />
      </main>
      <QuotePanel />
    </div>
  );
}
